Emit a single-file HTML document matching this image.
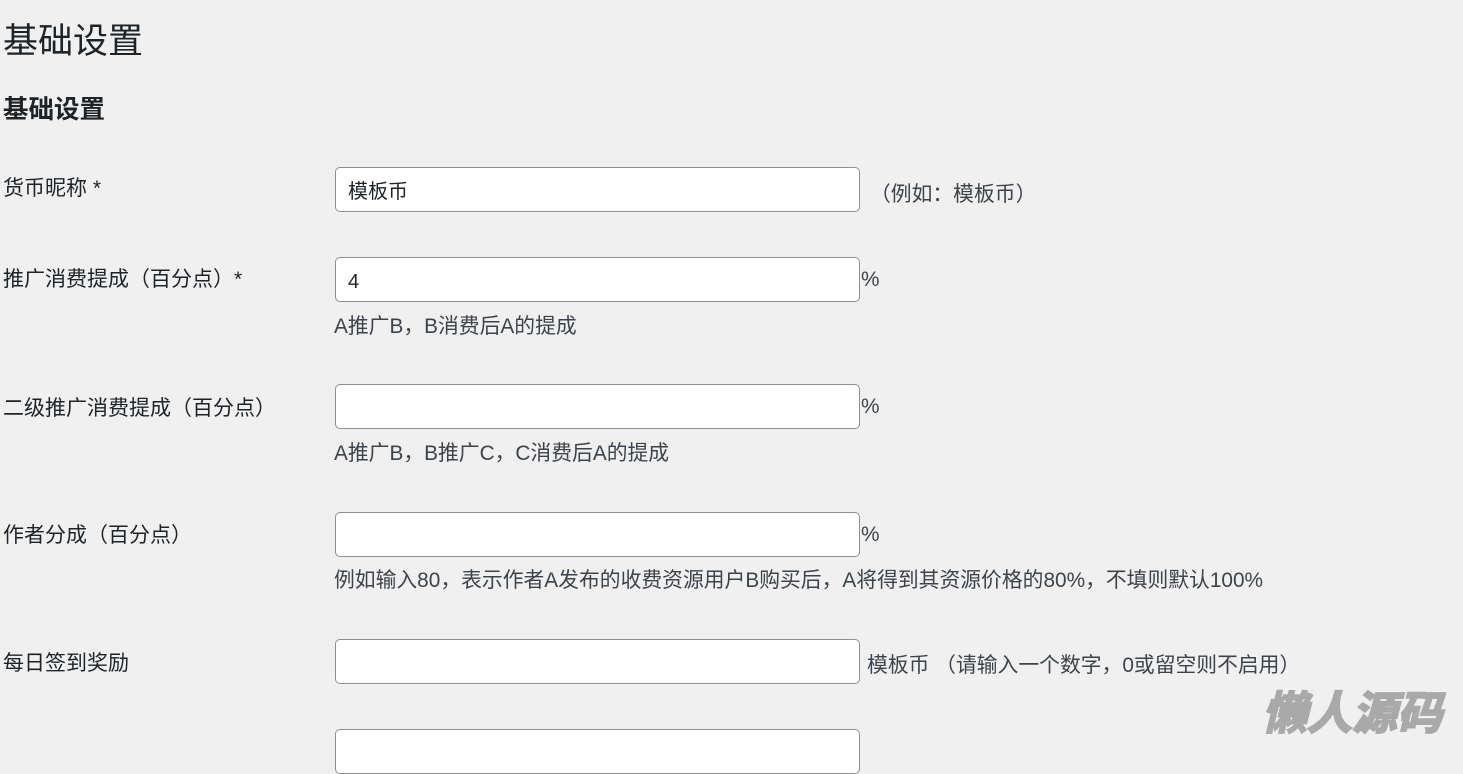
<!DOCTYPE html><html><head><meta charset="utf-8"><style>
body{margin:0;width:1463px;height:740px;background:#f0f0f1;overflow:hidden;position:relative;font-family:"Liberation Sans","Noto Sans CJK SC",sans-serif;color:#1d2327}
.a{position:absolute;white-space:nowrap}
.l{font-size:21px;color:#1d2327}
.i{position:absolute;left:335px;height:43px;background:#fff;border:1px solid #8c8f94;border-radius:5px;font-size:20px;line-height:48px;padding-left:12px;width:511px}
.d{font-size:20.8px;color:#3c434a}
</style></head><body>
<div class="a" style="left:3px;top:13px;font-size:35px;color:#1d2327">基础设置</div>
<div class="a" style="left:3px;top:89px;font-size:25.5px;font-weight:bold">基础设置</div>

<div class="a l" style="left:3px;top:172px">货币昵称 *</div>
<div class="i" style="top:167px">模板币</div>
<div class="a d" style="left:870px;top:177px">（例如：模板币）</div>

<div class="a l" style="left:3px;top:263px">推广消费提成（百分点）*</div>
<div class="i" style="top:257px">4</div>
<div class="a d" style="left:861px;top:268px">%</div>
<div class="a d" style="left:334px;top:309px">A推广B，B消费后A的提成</div>

<div class="a l" style="left:3px;top:392px">二级推广消费提成（百分点）</div>
<div class="i" style="top:384px"></div>
<div class="a d" style="left:861px;top:395px">%</div>
<div class="a d" style="left:334px;top:436px">A推广B，B推广C，C消费后A的提成</div>

<div class="a l" style="left:3px;top:519px">作者分成（百分点）</div>
<div class="i" style="top:512px"></div>
<div class="a d" style="left:861px;top:523px">%</div>
<div class="a d" style="left:334px;top:563px">例如输入80，表示作者A发布的收费资源用户B购买后，A将得到其资源价格的80%，不填则默认100%</div>

<div class="a l" style="left:3px;top:647px">每日签到奖励</div>
<div class="i" style="top:639px"></div>
<div class="a d" style="left:867px;top:648px">模板币 （请输入一个数字，0或留空则不启用）</div>

<div class="i" style="top:729px"></div>
<div class="a" style="left:1262px;top:677px;font-size:45px;font-weight:bold;font-style:italic;color:#a9a9a9;-webkit-text-stroke:2px #a9a9a9">懒人源码</div>
</body></html>
